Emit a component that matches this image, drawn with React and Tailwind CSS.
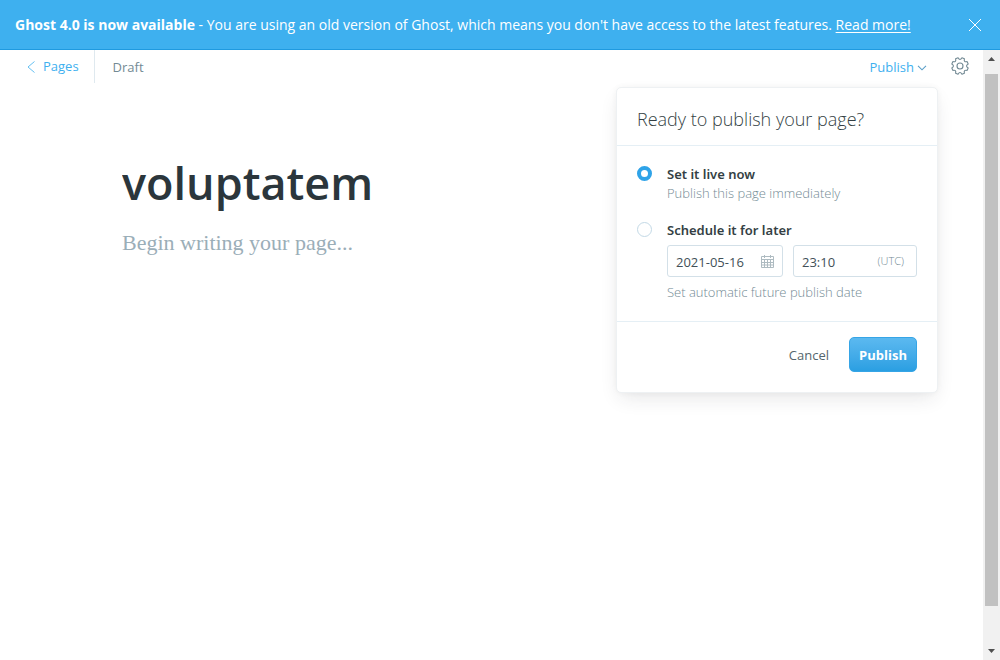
import React, { useState } from "react";

const polar = (radius, degrees) => {
  const a = (degrees * Math.PI) / 180;
  return `${(12 + radius * Math.sin(a)).toFixed(2)} ${(12 - radius * Math.cos(a)).toFixed(2)}`;
};

const gearPath =
  [0, 1, 2, 3, 4, 5, 6, 7]
    .map((i) => {
      const c = 22.5 + i * 45;
      return `${i === 0 ? "M" : "L"}${polar(11.2, c - 9)} L${polar(11.2, c + 9)} Q${polar(6.6, c + 22.5)} ${polar(11.2, c + 36)}`;
    })
    .join(" ") + "Z";

function GearIcon() {
  return (
    <svg viewBox="0 0 24 24" className="size-[18px]" fill="none" stroke="#738a94" strokeWidth="1.5" strokeLinejoin="round" aria-hidden="true">
      <path d={gearPath} />
      <circle cx="12" cy="12" r="4" />
    </svg>
  );
}

function CalendarIcon() {
  return (
    <svg viewBox="0 0 13 13" className="size-[13px] shrink-0" fill="none" stroke="#aebbc1" strokeWidth="1" aria-hidden="true">
      <path d="M.5 1.5h12v11H.5zM.5 4.5h12M.5 7.5h12M.5 10h12M3.5 4v8.5M6.5 4v8.5M9.5 4v8.5M3.5 0v3M9.5 0v3" />
    </svg>
  );
}

function Banner() {
  return (
    <aside className="flex h-[50px] shrink-0 items-center justify-between border-b border-[#1f9ae0] bg-[#3eb0ef] pr-[18px] pl-[15px] text-sm text-white">
      <p>
        <strong className="font-bold">Ghost 4.0 is now available</strong> - You are using an old version of Ghost, which means you don't have access to the latest features.{" "}
        <a href="#release" className="underline underline-offset-2">Read more!</a>
      </p>
      <button type="button" aria-label="Close">
        <svg viewBox="0 0 14 14" className="size-3.5" fill="none" stroke="#fff" strokeWidth="1" aria-hidden="true">
          <path d="M1 1l12 12M13 1L1 13" />
        </svg>
      </button>
    </aside>
  );
}

function PublishMenu() {
  const [mode, setMode] = useState("now");
  const radio =
    "mt-[3px] size-[15px] shrink-0 appearance-none rounded-full border border-[#c3d9e6] bg-white checked:border-4 checked:border-[#2fa3e8]";
  const label = "block font-['Noto_Sans',sans-serif] leading-[22px] font-semibold text-[#343f44]";
  const input = "h-full w-full min-w-0 pt-0.5 text-[#425058] outline-none";
  return (
    <form
      onSubmit={(e) => e.preventDefault()}
      className="absolute top-[37px] right-[45px] w-[322px] rounded-[5px] border border-[#eef1f3] bg-white text-[13px] shadow-[0_8px_20px_-4px_rgba(39,44,49,0.12),0_0_6px_rgba(39,44,49,0.04)]"
    >
      <h2 className="border-b border-[#e5eff5] px-5 pt-[19px] pb-[13px] text-[18px] leading-[25px] font-light text-[#343f44]">
        Ready to publish your page?
      </h2>
      <div className="flex flex-col gap-4 border-b border-[#e5eff5] px-5 pt-[17px] pb-5">
        <div className="flex gap-[15px]">
          <input type="radio" name="when" id="now" className={radio} checked={mode === "now"} onChange={() => setMode("now")} />
          <div>
            <label htmlFor="now" className={label}>Set it live now</label>
            <p className="-mt-px pb-px leading-[18px] font-light text-[#738a94]">Publish this page immediately</p>
          </div>
        </div>
        <div className="flex gap-[15px]">
          <input type="radio" name="when" id="later" className={radio} checked={mode === "later"} onChange={() => setMode("later")} />
          <div className="min-w-0 flex-1">
            <label htmlFor="later" className={label}>Schedule it for later</label>
            <div className="mt-1 flex gap-2.5">
              <div className="flex h-8 w-[116px] items-center rounded-[3px] border border-[#d3e0e8] px-2">
                <input aria-label="Date" defaultValue="2021-05-16" className={input} />
                <CalendarIcon />
              </div>
              <div className="flex h-8 min-w-0 flex-1 items-center rounded-[3px] border border-[#d3e0e8] pr-3 pl-2">
                <input aria-label="Time" defaultValue="23:10" className={input} />
                <span className="text-[11px] font-light text-[#738a94]">(UTC)</span>
              </div>
            </div>
            <p className="mt-1.5 leading-[18px] font-light text-[#738a94]">Set automatic future publish date</p>
          </div>
        </div>
      </div>
      <footer className="flex items-center justify-end gap-5 px-5 pt-[15px] pb-5">
        <button type="button" className="pt-0.5 text-[#54666d]">Cancel</button>
        <button type="submit" className="h-[35px] w-[68px] rounded-[5px] border border-[#36a5e6] bg-linear-to-b from-[#5bb9f0] to-[#2a9fe2] pt-0.5 font-bold text-white">
          Publish
        </button>
      </footer>
    </form>
  );
}

function Scrollbar() {
  return (
    <div className="flex w-[17px] shrink-0 flex-col items-center bg-[#f1f1f1]" aria-hidden="true">
      <svg viewBox="0 0 17 24" className="h-6 w-[17px] shrink-0"><path d="M5 11h7L8.5 7z" fill="#505050" /></svg>
      <div className="w-[13px] flex-1 bg-[#c1c1c1]" />
      <div className="h-9 shrink-0" />
      <svg viewBox="0 0 17 18" className="h-[18px] w-[17px] shrink-0"><path d="M5 7h7L8.5 11z" fill="#505050" /></svg>
    </div>
  );
}

export default function App() {
  return (
    <div className="flex min-h-screen flex-col bg-white font-['Open_Sans','Noto_Sans',sans-serif]">
      <Banner />
      <div className="flex flex-1">
        <main className="relative min-w-0 flex-1">
          <header className="flex h-[33px] items-center text-[13px]">
            <a href="#pages" className="flex h-full items-center gap-2 border-r border-[#dfe9ef] pr-[15px] pl-[27px] text-[#3eb0ef]">
              <svg viewBox="0 0 8 12" className="h-3 w-2" fill="none" stroke="currentColor" strokeWidth="0.8" aria-hidden="true">
                <path d="M7.5 .5L1 6l6.5 5.5" />
              </svg>
              Pages
            </a>
            <span className="pt-0.5 pl-[18px] text-[#738a94]">Draft</span>
            <div className="ml-auto flex items-center gap-6 pr-3.5">
              <button type="button" aria-expanded="true" className="flex items-center gap-[3px] pt-0.5 text-[#3eb0ef]">
                Publish
                <svg viewBox="0 0 10 6" className="h-1.5 w-2.5" fill="none" stroke="#5a9fc8" strokeWidth="1.1" aria-hidden="true">
                  <path d="M1 .8l4 4 4-4" />
                </svg>
              </button>
              <button type="button" aria-label="Settings" className="pb-0.5"><GearIcon /></button>
            </div>
          </header>
          <PublishMenu />
          <div className="px-[122px] pt-[68px]">
            <input
              aria-label="Page title"
              defaultValue="voluptatem"
              className="block h-16 w-full text-[45px] leading-[64px] font-semibold text-[#2b363c] outline-none"
            />
            <textarea
              aria-label="Page content"
              placeholder="Begin writing your page..."
              className="mt-3 block w-full resize-none font-[Georgia,'Liberation_Serif',serif] text-[22px] leading-8 outline-none placeholder:text-[#9baeb8]"
            />
          </div>
        </main>
        <Scrollbar />
      </div>
    </div>
  );
}
